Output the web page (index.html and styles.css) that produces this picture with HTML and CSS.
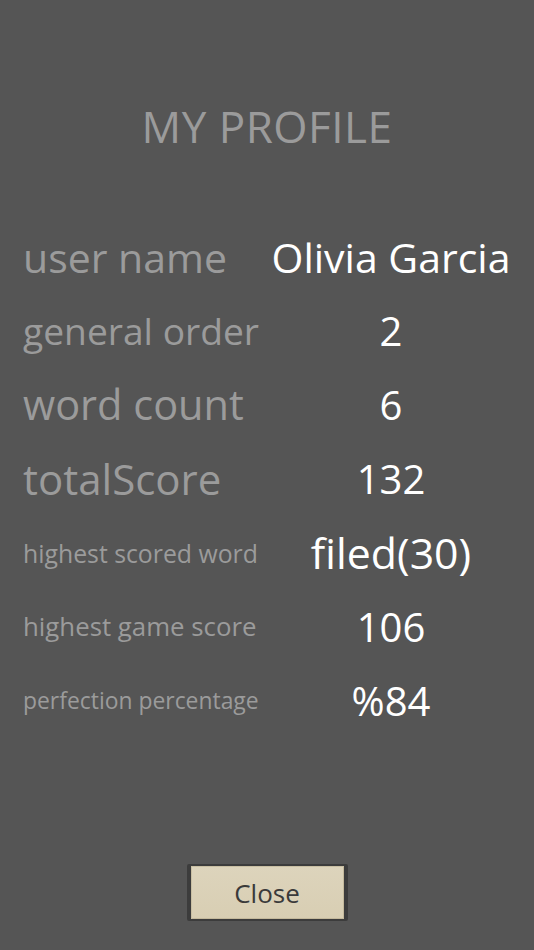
FILE: index.html
```html
<!DOCTYPE html>
<html lang="en">
<head>
<meta charset="utf-8">
<title>My Profile</title>
<link rel="stylesheet" href="styles.css">
</head>
<body>
<main class="screen">
  <h1 class="title">MY PROFILE</h1>
  <section class="stats">
    <div class="row"><span class="label l-user">user name</span><span class="value v-name">Olivia Garcia</span></div>
    <div class="row"><span class="label l-order">general order</span><span class="value">2</span></div>
    <div class="row"><span class="label l-count">word count</span><span class="value">6</span></div>
    <div class="row"><span class="label l-total">totalScore</span><span class="value">132</span></div>
    <div class="row"><span class="label l-word">highest scored word</span><span class="value v-word">filed(30)</span></div>
    <div class="row"><span class="label l-game">highest game score</span><span class="value">106</span></div>
    <div class="row"><span class="label l-perf">perfection percentage</span><span class="value">%84</span></div>
  </section>
  <div class="actions">
    <button class="close-btn" type="button">Close</button>
  </div>
</main>
</body>
</html>
```
FILE: styles.css
```css
html, body {
  margin: 0;
  padding: 0;
  background: #555555;
}
body {
  font-family: "Open Sans", "Noto Sans", sans-serif;
}
.screen {
  width: 534px;
  height: 950px;
  display: flex;
  flex-direction: column;
  overflow: hidden;
}
.title {
  margin: 101px 0 0;
  height: 50px;
  line-height: 50px;
  text-align: center;
  font-size: 44px;
  font-weight: 500;
  color: #9b9b9b;
  letter-spacing: 0.5px;
}
.stats {
  margin-top: 69px;
  display: flex;
  flex-direction: column;
}
.row {
  display: grid;
  grid-template-columns: 248px 286px;
  height: 74px;
  align-items: center;
}
.label {
  padding-left: 23px;
  color: #9b9b9b;
  font-weight: 500;
  white-space: nowrap;
  line-height: 1;
}
.value {
  text-align: center;
  color: #ffffff;
  font-size: 40px;
  font-weight: 500;
  white-space: nowrap;
  line-height: 1;
}
.v-name { font-size: 41px; }
.v-word { font-size: 42.8px; }
.l-user { font-size: 41px; }
.l-order { font-size: 37.2px; }
.l-count { font-size: 41.5px; }
.l-total { font-size: 42px; }
.l-word { font-size: 24.8px; }
.l-game { font-size: 25.8px; }
.l-perf { font-size: 22.9px; }
.actions {
  margin-top: 126px;
  display: flex;
  justify-content: center;
}
.close-btn {
  width: 161px;
  height: 57px;
  margin-left: 0;
  padding: 0;
  border: solid #3c3c3c;
  border-width: 2px 4px;
  border-radius: 2px;
  background: linear-gradient(180deg, #ddd4bc 0%, #d8ceb3 100%);
  box-shadow: inset 1px 1px 0 #c9bfa3, inset -1px -1px 0 #c4b99c;
  font-family: "Open Sans", "Noto Sans", sans-serif;
  font-size: 26px;
  font-weight: 500;
  color: #3a3a3a;
  cursor: pointer;
}
```
